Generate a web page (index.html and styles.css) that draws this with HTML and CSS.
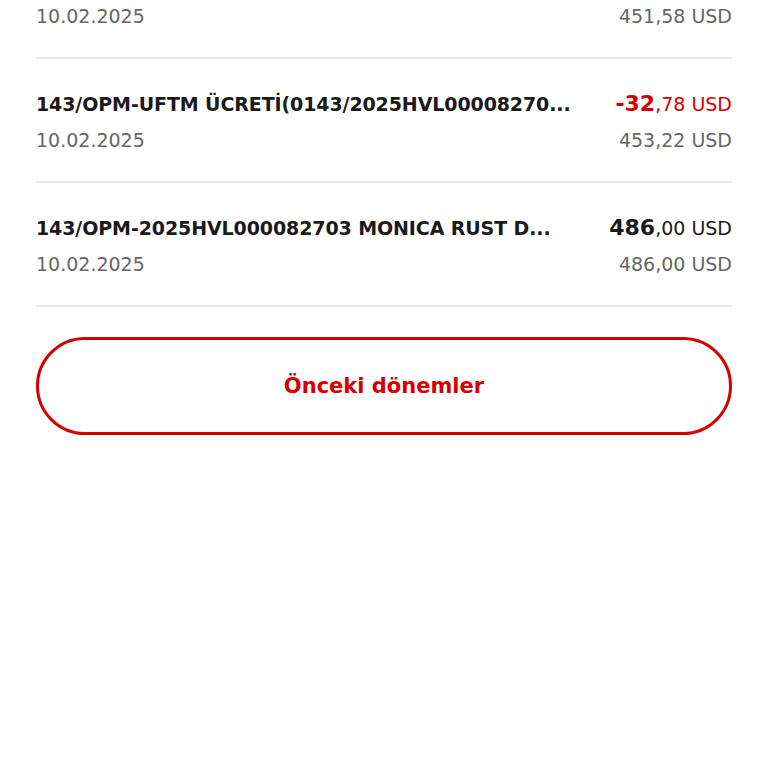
FILE: index.html
```html
<!DOCTYPE html>
<html lang="tr">
<head>
    <meta charset="UTF-8">
    <meta name="viewport" content="width=device-width, initial-scale=1.0">
    <title>Hesap Hareketleri</title>
    <link rel="stylesheet" href="styles.css">
</head>
<body>
    <div class="transactions">
        <div class="row first">
            <div class="line">
                <span class="title">143/OPM-2025HVL000082701 MONICA RUST D...</span>
                <span class="amount"><b>451</b>,58 USD</span>
            </div>
            <div class="line">
                <span class="date">10.02.2025</span>
                <span class="balance">451,58 USD</span>
            </div>
        </div>
        <div class="row">
            <div class="line">
                <span class="title">143/OPM-UFTM ÜCRETİ(0143/2025HVL00008270...</span>
                <span class="amount negative"><b>-32</b>,78 USD</span>
            </div>
            <div class="line">
                <span class="date">10.02.2025</span>
                <span class="balance">453,22 USD</span>
            </div>
        </div>
        <div class="row">
            <div class="line">
                <span class="title">143/OPM-2025HVL000082703 MONICA RUST D...</span>
                <span class="amount"><b>486</b>,00 USD</span>
            </div>
            <div class="line">
                <span class="date">10.02.2025</span>
                <span class="balance">486,00 USD</span>
            </div>
        </div>
    </div>

    <div class="actions">
        <button class="outline-button">Önceki dönemler</button>
    </div>
</body>
</html>
```

FILE: styles.css
```css
body {
    font-family: "DejaVu Sans", sans-serif;
    margin: 0;
    padding: 0;
    background-color: #fff;
    color: #1a1a1a;
}

.transactions {
    padding: 0 36px;
}

.row {
    padding: 30px 0 26px;
    border-bottom: 2px solid #e8e8e8;
    display: flex;
    flex-direction: column;
    gap: 6px;
}

/* list is scrolled, first row is cut off at the top */
.row.first {
    margin-top: -65px;
}

.line {
    display: flex;
    justify-content: space-between;
    align-items: baseline;
    height: 30px;
    line-height: 30px;
}

.title {
    font-size: 19px;
    font-weight: 700;
    letter-spacing: -0.1px;
    white-space: nowrap;
}

.amount {
    font-size: 19px;
    color: #1a1a1a;
    white-space: nowrap;
}

.amount b {
    font-size: 22px;
    font-weight: 700;
}

.amount.negative {
    color: #d40000;
}

.date,
.balance {
    font-size: 19px;
    color: #666;
}

.actions {
    padding: 30px 36px;
}

.outline-button {
    width: 100%;
    height: 98px;
    background-color: #fff;
    border: 3px solid #d40000;
    border-radius: 49px;
    color: #d40000;
    font-family: "DejaVu Sans", sans-serif;
    font-size: 21px;
    font-weight: 600;
    cursor: pointer;
}
```
